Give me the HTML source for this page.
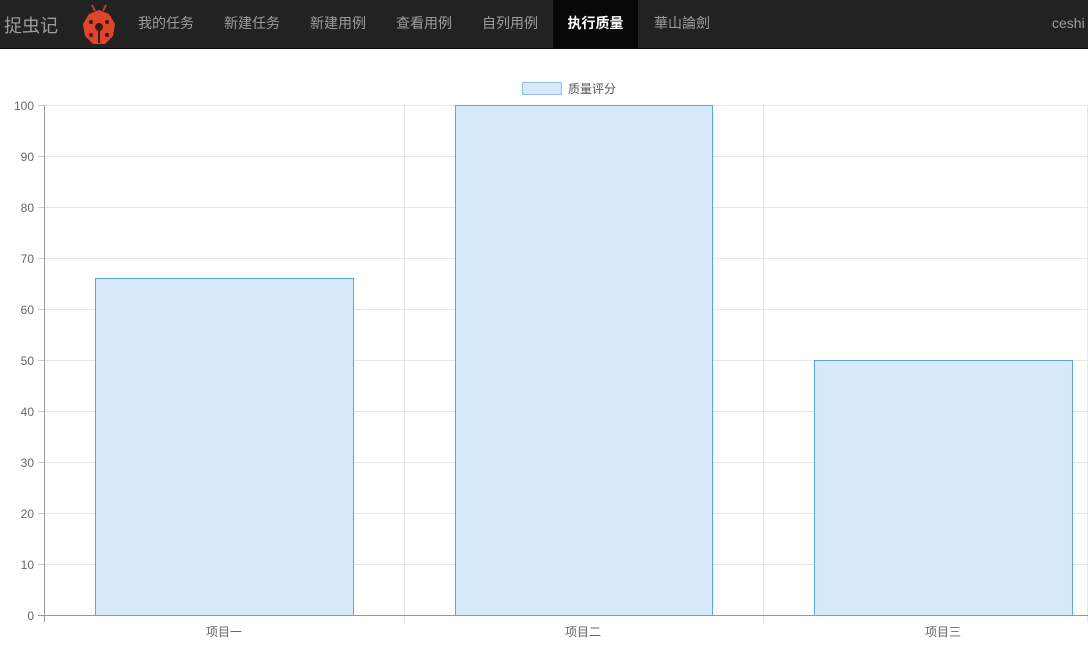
<!DOCTYPE html>
<html><head><meta charset="utf-8"><style>
body{margin:0;width:1088px;height:654px;background:#fff;overflow:hidden;font-family:"Liberation Sans","Noto Sans CJK SC",sans-serif;}
.nav{position:absolute;left:0;top:0;width:1088px;height:48px;background:#222;border-bottom:1px solid #080808;}
.brand{position:absolute;left:4px;top:12px;font-size:18px;color:#9d9d9d;}
.item{position:absolute;top:0;height:48px;line-height:46px;font-size:14px;color:#9d9d9d;}
.active{background:#080808;color:#fff;font-weight:bold;text-align:center;}
</style></head><body>
<div class="nav">
<div class="brand">捉虫记</div>
<svg style="position:absolute;left:78px;top:3px" width="42" height="44" viewBox="0 0 42 44">
<path d="M17 8 L14 2 M25 8 L28 2" stroke="#c0392b" stroke-width="2"/>
<polygon points="21,7 31,11 37,21 35,33 27,41 15,41 7,33 5,21 11,11" fill="#e0452c"/>
<circle cx="21" cy="24" r="4" fill="#3a1a14"/><rect x="20" y="26" width="2" height="14" fill="#3a1a14"/>
<circle cx="13" cy="19" r="2" fill="#3a1a14"/><circle cx="29" cy="19" r="2" fill="#3a1a14"/>
<circle cx="13" cy="32" r="2" fill="#3a1a14"/><circle cx="29" cy="32" r="2" fill="#3a1a14"/>
</svg>
<div class="item" style="left:138px">我的任务</div>
<div class="item" style="left:224px">新建任务</div>
<div class="item" style="left:310px">新建用例</div>
<div class="item" style="left:396px">查看用例</div>
<div class="item" style="left:482px">自列用例</div>
<div class="item active" style="left:553px;width:85px">执行质量</div>
<div class="item" style="left:654px">華山論劍</div>
<div class="item" style="left:1052px">ceshi</div>
</div>
<svg style="position:absolute;left:0;top:0" width="1088" height="654" font-family="Liberation Sans, Noto Sans CJK SC, sans-serif" font-size="12" fill="#666">
<rect x="522.5" y="82.5" width="39" height="12" fill="#d6e9fa" stroke="#8fc1ea"/>
<text x="568" y="93" fill="#555">质量评分</text>
<g stroke="#e6e6e6" stroke-width="1">
<line x1="44" y1="105.5" x2="1088" y2="105.5"/><line x1="44" y1="156.5" x2="1088" y2="156.5"/>
<line x1="44" y1="207.5" x2="1088" y2="207.5"/><line x1="44" y1="258.5" x2="1088" y2="258.5"/>
<line x1="44" y1="309.5" x2="1088" y2="309.5"/><line x1="44" y1="360.5" x2="1088" y2="360.5"/>
<line x1="44" y1="411.5" x2="1088" y2="411.5"/><line x1="44" y1="462.5" x2="1088" y2="462.5"/>
<line x1="44" y1="513.5" x2="1088" y2="513.5"/><line x1="44" y1="564.5" x2="1088" y2="564.5"/>
<line x1="404.5" y1="105" x2="404.5" y2="622"/><line x1="763.5" y1="105" x2="763.5" y2="622"/>
<line x1="1087.5" y1="105" x2="1087.5" y2="622"/>
</g>
<g stroke="#ccc"><line x1="38" y1="105.5" x2="44" y2="105.5"/><line x1="38" y1="156.5" x2="44" y2="156.5"/><line x1="38" y1="207.5" x2="44" y2="207.5"/><line x1="38" y1="258.5" x2="44" y2="258.5"/><line x1="38" y1="309.5" x2="44" y2="309.5"/><line x1="38" y1="360.5" x2="44" y2="360.5"/><line x1="38" y1="411.5" x2="44" y2="411.5"/><line x1="38" y1="462.5" x2="44" y2="462.5"/><line x1="38" y1="513.5" x2="44" y2="513.5"/><line x1="38" y1="564.5" x2="44" y2="564.5"/><line x1="38" y1="615.5" x2="44" y2="615.5"/></g>
<g fill="#d6e9fa" stroke="#5aa7de" stroke-width="1">
<rect x="95.5" y="278.5" width="258" height="337"/>
<rect x="455.5" y="105.5" width="257" height="510"/>
<rect x="814.5" y="360.5" width="258" height="255"/>
</g>
<line x1="44.5" y1="105" x2="44.5" y2="622" stroke="#999"/>
<line x1="38" y1="615.5" x2="1088" y2="615.5" stroke="#999"/>
<g text-anchor="end">
<text x="34" y="110">100</text><text x="34" y="161">90</text><text x="34" y="212">80</text><text x="34" y="263">70</text><text x="34" y="314">60</text><text x="34" y="365">50</text><text x="34" y="416">40</text><text x="34" y="467">30</text><text x="34" y="518">20</text><text x="34" y="569">10</text><text x="34" y="620">0</text>
</g>
<g text-anchor="middle"><text x="224" y="636">项目一</text><text x="583" y="636">项目二</text><text x="943" y="636">项目三</text></g>
</svg>
</body></html>
